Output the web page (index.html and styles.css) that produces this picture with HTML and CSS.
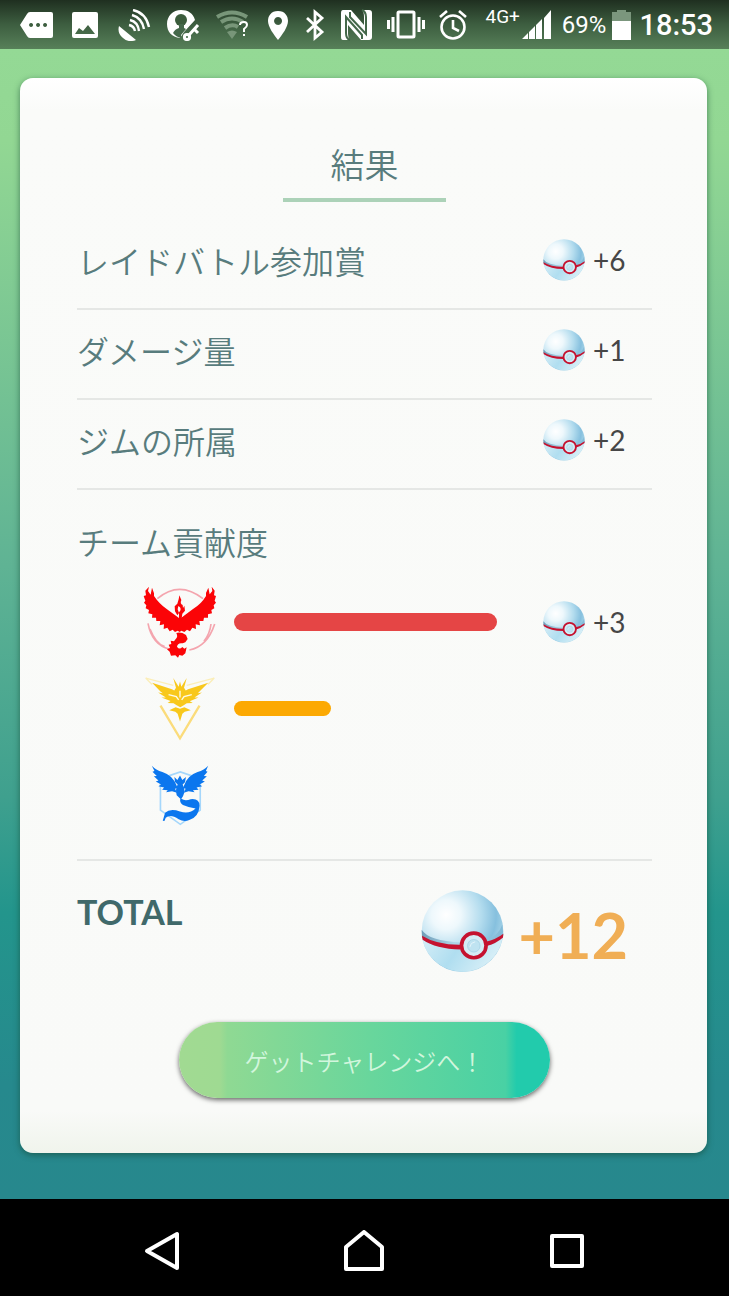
FILE: index.html
```html
<!DOCTYPE html>
<html lang="ja">
<head>
    <meta charset="UTF-8">
    <meta name="viewport" content="width=device-width, initial-scale=1.0">
    <title>結果</title>
    <link rel="stylesheet" href="styles.css">
</head>
<body>
    <!-- shared ball drawing -->
    <svg class="defs" aria-hidden="true">
        <defs>
            <radialGradient id="ball-top" cx="0.3" cy="0.3" r="0.72">
                <stop offset="0" stop-color="#ffffff"/>
                <stop offset="0.25" stop-color="#eef8fc"/>
                <stop offset="0.6" stop-color="#b3dcee"/>
                <stop offset="0.85" stop-color="#86c0de"/>
                <stop offset="1" stop-color="#a5d3e8"/>
            </radialGradient>
            <linearGradient id="ball-bottom" x1="0" y1="0" x2="1" y2="0.3">
                <stop offset="0" stop-color="#d6eef7"/>
                <stop offset="0.5" stop-color="#b0def0"/>
                <stop offset="1" stop-color="#d8eff7"/>
            </linearGradient>
            <linearGradient id="ball-band" x1="0" y1="0" x2="1" y2="0">
                <stop offset="0" stop-color="#6f9db8"/>
                <stop offset="0.4" stop-color="#aed6e8"/>
                <stop offset="1" stop-color="#82bad7"/>
            </linearGradient>
            <symbol id="ball" viewBox="37 28 250 250">
                <circle cx="162" cy="152" r="123" fill="url(#ball-top)"/>
                <path d="M39 148Q60 182 158 186L235 178Q270 166 282 132L285 165Q262 190 196 202Q90 205 40 172Z" fill="url(#ball-band)"/>
                <path d="M41 176Q80 204 160 204L234 196Q265 190 283 170A123 123 0 0 1 41 176Z" fill="url(#ball-bottom)"/>
                <path d="M40 166Q85 194 156 193V207Q82 206 42 178ZM232 184Q262 178 285 160L284 171Q262 190 234 197Z" fill="#c5122f"/>
                <circle cx="196" cy="195" r="37" fill="#d5edf6" stroke="#c5122f" stroke-width="11"/>
                <circle cx="196" cy="196" r="19" fill="#bfe3f1" stroke="#9fcfe4" stroke-width="2"/>
                <path d="M184 200Q186 186 200 184" fill="none" stroke="#e4f4fa" stroke-width="3"/>
            </symbol>
        </defs>
    </svg>

    <div class="status-bar">
        <div class="status-icons">
            <svg width="33" height="32" viewBox="0 0 33 32"><path fill="#fff" fill-rule="evenodd" d="M0 16 7 5Q8 3 10 3H31Q33 3 33 5V27Q33 29 31 29H10Q8 29 7 27ZM11 14a2 2 0 1 0 .1 0ZM18 14a2 2 0 1 0 .1 0ZM25 14a2 2 0 1 0 .1 0Z"/></svg>
            <svg width="33" height="32" viewBox="0 0 33 32"><path fill="#fff" fill-rule="evenodd" d="M5 3H27Q29 3 29 5V27Q29 29 27 29H5Q3 29 3 27V5Q3 3 5 3ZM6 25H26L19 16 14 22 10 19Z"/></svg>
            <svg width="33" height="32" viewBox="0 0 33 32"><path fill="#fff" d="M1 17 18 31Q10 34 5 29Q-1 24 1 17Z"/><g fill="none" stroke="#fff" stroke-width="2.4"><path d="M15 1Q28 4 31 18M14 6Q24 9 26 20M12 11Q20 13 21 22M11 16Q16 17 17 22"/></g></svg>
            <svg width="33" height="32" viewBox="0 0 33 32"><path fill="#fff" d="M14 1C21 1 26 4 28 11L17 23 13 29C5 28 0 23 0 15C0 7 6 1 14 1Z"/><circle cx="14" cy="11" r="6" fill="#3b5c3c"/><path d="M6 24Q8 20 12 19V15H17V19L19 20 14 26V29Q9 28 6 24Z" fill="#44684a"/><g fill="none" stroke="#fff" stroke-width="3"><circle cx="20" cy="28" r="2.600"/><path d="M22 26 31 16M27 20 31 24"/></g></svg>
            <svg width="33" height="32" viewBox="0 0 33 32"><g fill="none" stroke="#789679" stroke-width="4"><path d="M1 8Q16-1 31 8M5 13Q16 6 27 13M9 19Q16 14 22 18"/></g><path d="M11 23Q16 20 21 23L16 30Z" fill="#789679"/><path d="M24 16Q24 13 28 13Q31 13 31 16Q31 18 28 20V23M28 25V27" fill="none" stroke="#fff" stroke-width="2"/></svg>
            <svg width="26" height="32" viewBox="0 0 26 32"><path fill="#fff" fill-rule="evenodd" d="M13 2C6 2 3 7 3 12C3 18 9 26 13 31C17 26 23 18 23 12C23 7 20 2 13 2ZM13 8a4 4 0 1 0 .1 0Z"/></svg>
        </div>
        <div class="status-icons system">
            <svg width="20" height="32" viewBox="0 0 20 32"><path d="M2 9 17 23 10 29V3L17 9 2 23" fill="none" stroke="#fff" stroke-width="2.8"/></svg>
            <svg width="34" height="34" viewBox="0 0 34 34"><path fill="#fff" d="M4 2H12L25 17V9Q25 4 23 2H30Q33 2 33 5V29Q33 32 30 32H22L9 17V26Q9 30 11 32H4Q2 32 2 29V5Q2 2 4 2Z"/><path d="M11 32Q7 31 7 25V9L23 27V31M23 2Q27 4 27 9V26L11 9V4" fill="none" stroke="#44684a" stroke-width="2"/></svg>
            <svg width="38" height="32" viewBox="0 0 38 32"><rect x="11" y="3" width="16" height="25" rx="1" fill="none" stroke="#fff" stroke-width="3"/><path d="M1.500 11V20M6 8V23M32 8V23M36.500 11V20" stroke="#fff" stroke-width="3"/></svg>
            <svg width="28" height="32" viewBox="0 0 28 32"><g fill="none" stroke="#fff" stroke-width="2.600"><circle cx="14" cy="18" r="11.500"/><path d="M14 11V19L20 22M1 8 8 2M20 2 27 8"/></g></svg>
        </div>
        <div class="status-right">
            <span class="network">4G+</span>
            <svg width="30" height="32" viewBox="0 0 30 32"><path fill="#fff" d="M0 30 6 24V30ZM7 23 13 17V30H7ZM14 16 20 10V30H14ZM22 9 29 1V30H22Z"/></svg>
            <span class="percent">69%</span>
            <svg width="20" height="32" viewBox="0 0 20 32"><path fill="#7b967d" d="M0 3H5V1H14V3H19V12H0Z"/><path fill="#fff" d="M0 12H19V31H0Z"/></svg>
            <span class="clock">18:53</span>
        </div>
    </div>

    <main class="screen">
        <div class="card">
            <h1>結果</h1>

            <table class="rewards">
                <tbody>
                    <tr>
                        <th scope="row">レイドバトル参加賞</th>
                        <td><div class="reward"><svg class="ball"><use href="#ball"/></svg>+6</div></td>
                    </tr>
                    <tr>
                        <th scope="row">ダメージ量</th>
                        <td><div class="reward"><svg class="ball"><use href="#ball"/></svg>+1</div></td>
                    </tr>
                    <tr>
                        <th scope="row">ジムの所属</th>
                        <td><div class="reward"><svg class="ball"><use href="#ball"/></svg>+2</div></td>
                    </tr>
                </tbody>
            </table>

            <section class="teams">
                <h2>チーム貢献度</h2>
                <div class="team">
                    <svg class="emblem" width="74" height="72" viewBox="40 36 220 216">
                        <g fill="none" stroke="#f4a5ae" stroke-width="5">
                            <path d="M82 74Q148 18 219 74M54 148Q66 212 118 225M254 150Q232 218 178 228M60 165Q78 210 104 218M243 150Q240 178 222 202"/>
                        </g>
                        <path fill="#fb0407" d="M57 38 54 51 62 62 66 41 72 58 72 66Q88 90 111 106L150 134 188 106Q214 90 228 66L228 57 235 41 239 61 247 51 245 38 254 50 252 64 258 66 254 80 258 86 251 94 253 103 244 108 246 118 234 121 234 131 222 131 220 141 208 141 210 154 197 151 198 165 187 161 180 172 171 167 163 174 154 170 149 174 143 170 135 174 128 167 119 172 112 161 101 165 102 151 89 154 91 141 79 141 78 131 66 131 67 121 55 118 57 108 47 103 49 94 42 86 46 80 41 66 48 64 46 50Z"/>
                        <path fill="#fb0407" d="M148 64 154 78Q149 90 158 93L159 102 163 95 165 110 157 119 154 140H147V115Q155 107 150 100L145 96 143 106 147 117 142 124 135 112 134 97 142 89Q147 76 148 64Z"/>
                        <path fill="#fb0407" d="M139 177Q153 173 168 183L173 195 166 205 158 208Q143 205 141 218Q148 229 157 219L163 224 170 220 166 238 157 245 148 243 144 251 136 244 123 245 119 233 111 226 120 222 116 212 124 210 122 200 132 202 139 193Q144 188 139 177Z"/>
                    </svg>
                    <div class="track"><div class="bar valor" style="width: 85%"></div></div>
                    <div class="reward"><svg class="ball"><use href="#ball"/></svg>+3</div>
                </div>
                <div class="team">
                    <svg class="emblem" width="70" height="64" viewBox="45 36 208 190">
                        <path d="M91 121 149 218 207 121" fill="none" stroke="#fbdc7b" stroke-width="7"/>
                        <path d="M47 39 129 61M251 39 169 61M47 39 66 58M251 39 232 58" fill="none" stroke="#fbeeb8" stroke-width="4"/>
                        <path fill="#f8c81c" d="M66 53 125 72 132 76 137 68 129 39 145 65 149 49 153 65 169 39 161 68 166 76 173 72 233 53 207 79 202 84 214 82 192 97 204 97 178 108 187 113 169 114 160 120 150 126 139 120 130 114 112 113 121 107 94 97 107 97 84 82 98 84 91 79Z"/>
                        <path fill="#f8c81c" d="M136 126 149 130 162 126 181 135 163 139 156 145 149 168 142 145 135 139 117 135Z"/>
                        <path d="M115 88 138 94 145 104M184 88 161 94 154 104M149 77V97" fill="none" stroke="#fffbe9" stroke-width="4"/>
                    </svg>
                    <div class="track"><div class="bar instinct" style="width: 31.5%"></div></div>
                </div>
                <div class="team">
                    <svg class="emblem" width="58" height="61" viewBox="62 300 174 184">
                        <path d="M90 341 150 321 210 341V436L150 479 90 436Z" fill="none" stroke="#a5d7fb" stroke-width="5"/>
                        <path fill="#0b76ee" d="M64 302Q76 315 96 321Q126 331 138 360L142 369 134 372 140 384 125 379 107 382 112 376 95 375 101 368 84 364 92 359 76 350 84 347 70 334 79 333 66 320 72 318Z"/>
                        <path fill="#0b76ee" d="M234 302Q222 315 202 321Q173 331 162 360L158 369 166 372 160 384 175 379 193 382 188 376 205 375 199 368 216 364 208 359 224 350 216 347 230 334 221 333 232 320 227 318Z"/>
                        <path fill="#0b76ee" d="M132 336 141 345 149 332 156 345 167 336 164 352 157 359Q167 378 158 394L153 402Q165 410 181 403Q208 400 208 423Q206 457 177 466Q161 472 145 464Q120 447 106 459L102 469 97 468 104 444Q119 430 149 440Q177 449 196 431Q178 430 158 421Q147 414 150 402L139 391Q134 374 142 359L134 351Z"/>
                    </svg>
                </div>
            </section>

            <section class="total">
                <h2>TOTAL</h2>
                <div class="total-reward"><svg class="ball"><use href="#ball"/></svg>+12</div>
            </section>

            <button class="challenge" type="button">ゲットチャレンジへ！</button>
        </div>
    </main>

    <nav class="nav-bar">
        <button type="button" aria-label="戻る"><svg width="42" height="42" viewBox="0 0 42 42"><path d="M36 4V38L6 21Z"/></svg></button>
        <button type="button" aria-label="ホーム"><svg width="42" height="42" viewBox="0 0 42 42"><path d="M21 2 39 17V39H3V17Z"/></svg></button>
        <button type="button" aria-label="アプリ履歴"><svg width="42" height="42" viewBox="0 0 42 42"><path d="M6 6H36V36H6Z"/></svg></button>
    </nav>
</body>
</html>
```
FILE: styles.css
```css
body {
    margin: 0;
    min-height: 100vh;
    display: flex;
    flex-direction: column;
    font-family: Lato, "Noto Sans CJK JP", sans-serif;
    background-color: #000;
}
h1, h2 {
    margin: 0;
    font-weight: 350;
    color: #587c7d;
}
svg {
    flex: none;
}
.defs {
    position: absolute;
    width: 0;
    height: 0;
}

/* status bar */
.status-bar {
    display: flex;
    align-items: center;
    height: 49px;
    padding: 0 16px 0 20px;
    box-sizing: border-box;
    background: linear-gradient(#1f2f20, #3d5e40 50%, #578059);
    color: #fff;
    font-family: Roboto, sans-serif;
}
.status-icons {
    display: flex;
    align-items: center;
    gap: 16px;
}
.status-icons.system {
    gap: 14px;
    margin-left: 14px;
}
.status-right {
    display: flex;
    align-items: center;
    margin-left: auto;
}
.network {
    font-size: 19px;
    line-height: 20px;
    padding-bottom: 16px;
    margin-right: 2px;
}
.percent {
    font-size: 24px;
    margin: 0 6px 0 10px;
}
.clock {
    font-size: 29px;
    font-weight: 500;
    margin-left: 7px;
}

/* results card */
.screen {
    flex: 1;
    padding: 29px 22px 46px 20px;
    background: linear-gradient(#94d995, #92d793 8%, #5fb394 45%, #3fa08e 65%, #23958c 75%, #26898d 90%, #27888d);
}
.card {
    box-sizing: border-box;
    padding: 64px 55px 55px 57px;
    border-radius: 13px;
    background: linear-gradient(#fff, #fafbf9 3%, #f9faf8 96%, #f0f4ec);
    box-shadow: 0 2px 6px rgba(20, 70, 50, 0.6);
    display: flex;
    flex-direction: column;
}
h1 {
    align-self: center;
    width: 163px;
    padding-bottom: 11px;
    border-bottom: 4px solid #acd2b8;
    font-size: 34px;
    line-height: 45px;
    text-align: center;
}
.rewards {
    width: 100%;
    margin-top: 17px;
    border-collapse: collapse;
}
.rewards tr {
    height: 90px;
    border-bottom: 2px solid #e5e7e5;
}
.rewards th, .rewards td {
    padding: 0 0 8px;
}
.rewards th {
    font-size: 32px;
    font-weight: 350;
    text-align: left;
    color: #587c7d;
}
.rewards td {
    width: 109px;
}
.reward {
    display: flex;
    align-items: center;
    gap: 8px;
    font-size: 28px;
    color: #464646;
}
.ball {
    width: 42px;
    height: 42px;
}

/* team contribution */
.teams {
    padding: 29px 0 20px;
    border-bottom: 2px solid #e5e7e5;
}
.teams h2 {
    font-size: 32px;
    line-height: 48px;
    margin-bottom: 11px;
}
.team {
    display: grid;
    grid-template-columns: 74px 1fr 109px;
    column-gap: 17px;
    align-items: center;
    height: 87px;
    padding-left: 66px;
}
.emblem {
    justify-self: center;
}
.track {
    margin-right: -17px;
}
.bar {
    border-radius: 10px;
}
.valor {
    height: 18px;
    background-color: #e54545;
}
.instinct {
    height: 15px;
    background-color: #fca903;
}

.total {
    display: flex;
    justify-content: space-between;
    padding: 29px 24px 0 0;
}
.total h2 {
    font-size: 34px;
    line-height: 44px;
    font-weight: 700;
    color: #40696a;
}
.total-reward {
    display: flex;
    align-items: flex-start;
    gap: 14px;
    font-size: 63px;
    line-height: 90px;
    font-weight: 700;
    color: #f0ae55;
}
.total .ball {
    width: 83px;
    height: 83px;
}
.challenge {
    align-self: center;
    width: 100%;
    max-width: 371px;
    height: 76px;
    margin-top: 42px;
    border: none;
    border-radius: 38px;
    background: linear-gradient(90deg, #a1da92, #9fda92 11%, #8fd993 13%, #68d69c 52%, #49d1a4 88%, #22cbac 91%, #22cbac);
    box-shadow: 0 2px 5px rgba(0, 0, 0, 0.6);
    font-family: "Noto Sans CJK JP", sans-serif;
    font-size: 24px;
    font-weight: 350;
    color: #d2f6dd;
    cursor: pointer;
}

/* bottom navigation */
.nav-bar {
    display: flex;
    height: 97px;
    padding: 0 61px;
    background-color: #000;
}
.nav-bar button {
    flex: 1;
    display: flex;
    align-items: center;
    justify-content: center;
    padding: 6px 0 0;
    border: none;
    background: none;
    cursor: pointer;
}
.nav-bar path {
    fill: none;
    stroke: #fff;
    stroke-width: 4;
    stroke-linejoin: round;
}
```
